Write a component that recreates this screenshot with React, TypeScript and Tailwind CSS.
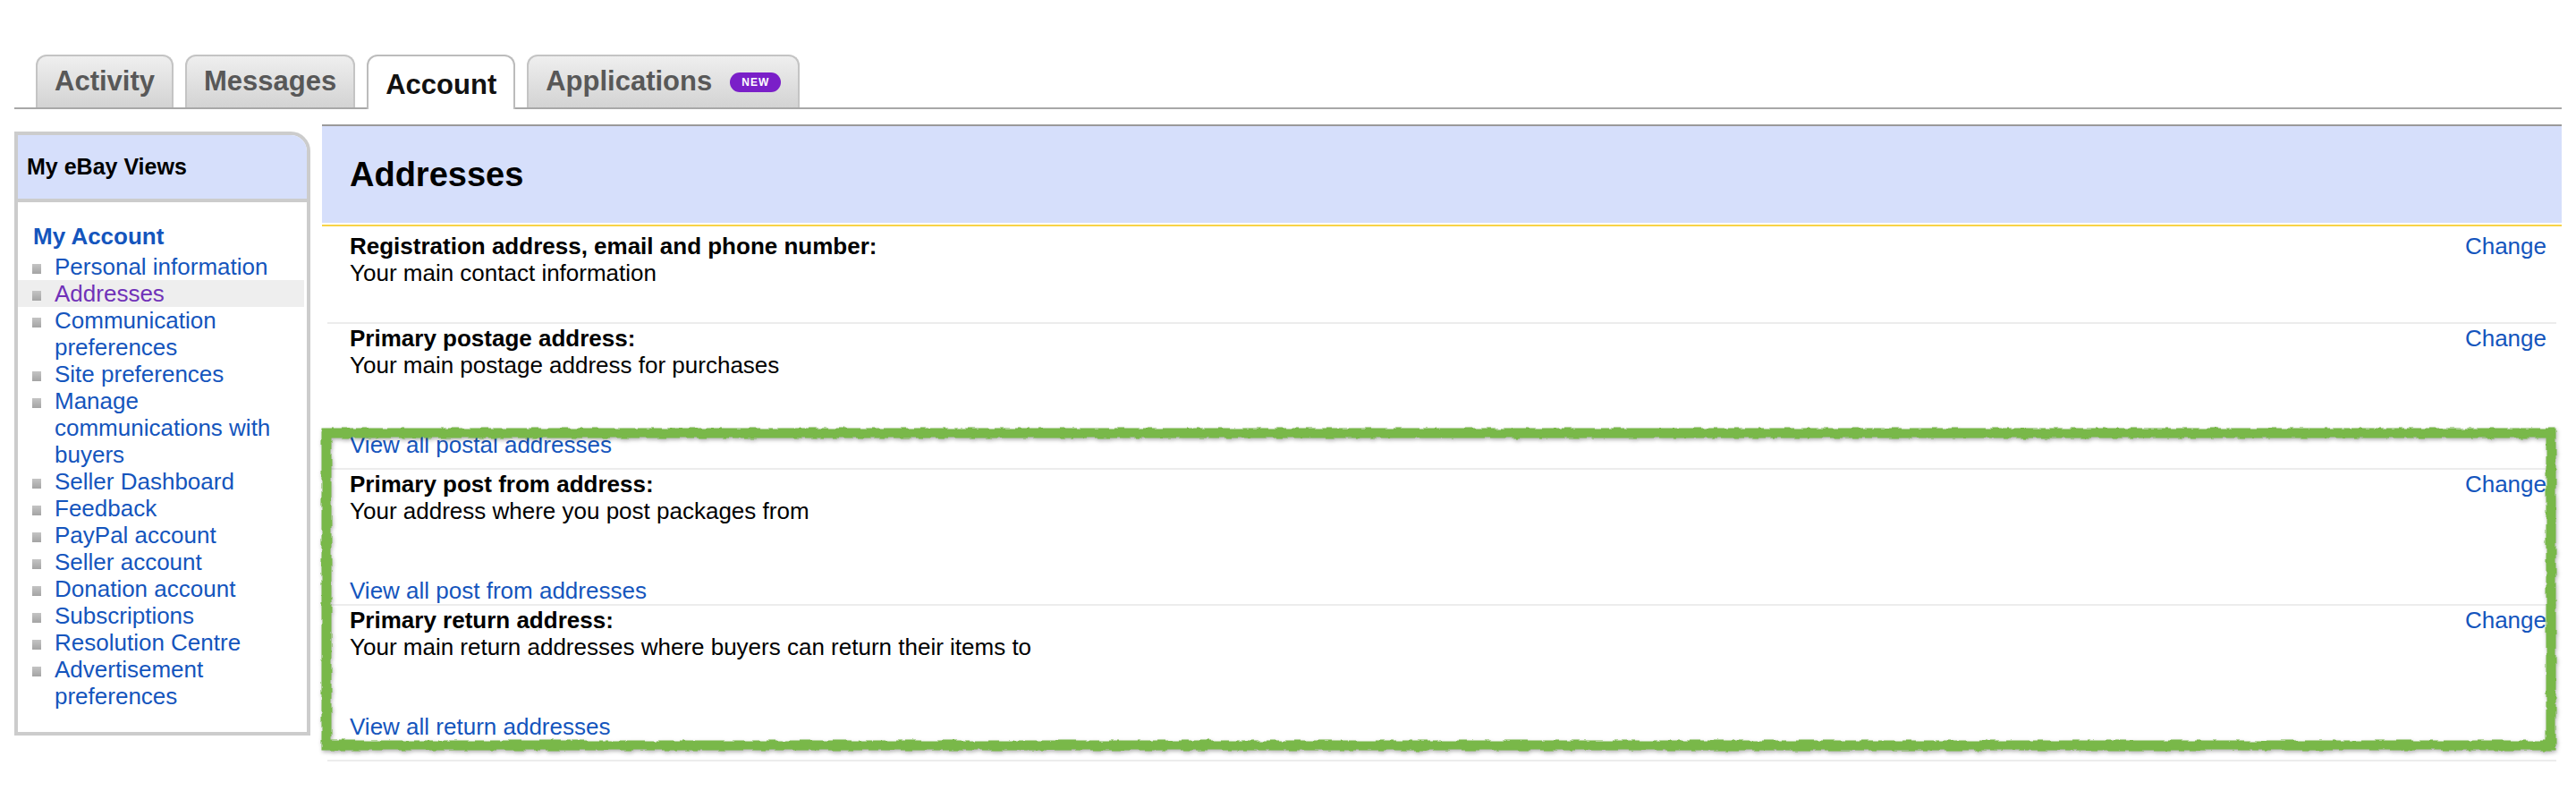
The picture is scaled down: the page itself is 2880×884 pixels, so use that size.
import React from "react"

const tabs = [
  { label: "Activity", active: false },
  { label: "Messages", active: false },
  { label: "Account", active: true },
  { label: "Applications", active: false, badge: true },
]

const menu = [
  "Personal information",
  "Addresses",
  "Communication preferences",
  "Site preferences",
  "Manage communications with buyers",
  "Seller Dashboard",
  "Feedback",
  "PayPal account",
  "Seller account",
  "Donation account",
  "Subscriptions",
  "Resolution Centre",
  "Advertisement preferences",
]

function Tab({ label, active, badge }: { label: string; active: boolean; badge?: boolean }) {
  if (active) {
    return (
      <div className="relative -mb-[2px] flex h-[61px] items-center rounded-t-[12px] border-2 border-b-0 border-[#bcbcbc] bg-white px-[19px] pt-[6px] text-[31px] font-bold text-[#111]">
        {label}
      </div>
    )
  }
  return (
    <div className="flex h-[59px] items-center gap-[20px] rounded-t-[12px] border-2 border-b-0 border-[#c4c4c4] bg-gradient-to-b from-[#efefef] to-[#d3d3d3] px-[19px] text-[31px] font-bold text-[#585858]">
      <span>{label}</span>
      {badge && (
        <span className="flex h-[22px] w-[57px] items-center justify-center rounded-full bg-[#7a1fc8] text-[12px] font-bold tracking-[1px] text-white">
          NEW
        </span>
      )}
    </div>
  )
}

function Row({
  title,
  body,
  link,
  pt,
  pb,
}: {
  title: string
  body: string
  link?: string
  pt: string
  pb: string
}) {
  return (
    <div className={`mx-[6px] border-b-2 border-[#ececec] pl-[25px] pr-[11px] ${pt} ${pb}`}>
      <div className="flex justify-between">
        <div>
          <div className="font-bold">{title}</div>
          <div>{body}</div>
        </div>
        <a className="text-[#1455bd]">Change</a>
      </div>
      {link && <a className="mt-[59px] block text-[#1455bd]">{link}</a>}
    </div>
  )
}

export default function App() {
  return (
    <div className="min-h-[884px] w-full bg-white font-['Liberation_Sans',Arial,sans-serif] text-black">
      {/* tabs */}
      <div className="ml-[16px] flex w-[2848px] items-end gap-[13px] border-b-2 border-[#a8a8a8] pl-[24px] pt-[61px]">
        {tabs.map((t) => (
          <Tab key={t.label} {...t} />
        ))}
      </div>

      <div className="ml-[16px] mt-[17px] flex items-start gap-[13px]">
        {/* sidebar */}
        <div className="mt-[8px] w-[331px] rounded-tr-[22px] border-4 border-[#cccccc] bg-white">
          <div className="flex h-[75px] items-center rounded-tr-[18px] border-b-4 border-[#cccccc] bg-[#d6dffb] pl-[10px] text-[25px] font-bold">
            My eBay Views
          </div>
          <div className="pb-[25px] pt-[23px] text-[26px] leading-[30px]">
            <div className="mb-[4px] pl-[17px] font-bold text-[#1455bd]">My Account</div>
            {menu.map((m) => (
              <div
                key={m}
                className={`mr-[3px] flex pl-[16px] pr-[8px] ${m === "Addresses" ? "bg-[#eeeeee] text-[#7031b8]" : "text-[#1455bd]"}`}
              >
                <span className="mr-[15px] mt-[12px] h-[11px] w-[10px] shrink-0 bg-gradient-to-b from-[#c4c4c4] to-[#a4a4a4]" />
                <span>{m}</span>
              </div>
            ))}
          </div>
        </div>

        {/* main */}
        <div className="relative w-[2504px]">
          <div className="flex h-[112px] items-center border-t-2 border-b-2 border-t-[#9a9a9a] border-b-white bg-[#d6dffb] pl-[31px] text-[38px] font-bold">
            Addresses
          </div>
          <div className="h-[2px] bg-[#f8d347]" />

          <div className="text-[26px] leading-[30px]">
            <Row
              title="Registration address, email and phone number:"
              body="Your main contact information"
              pt="pt-[7px]"
              pb="pb-[40px]"
            />
            <Row
              title="Primary postage address:"
              body="Your main postage address for purchases"
              link="View all postal addresses"
              pt="pt-[1px]"
              pb="pb-[11px]"
            />
            <Row
              title="Primary post from address:"
              body="Your address where you post packages from"
              link="View all post from addresses"
              pt="pt-[1px]"
              pb="pb-0"
            />
            <Row
              title="Primary return address:"
              body="Your main return addresses where buyers can return their items to"
              link="View all return addresses"
              pt="pt-[1px]"
              pb="pb-[22px]"
            />
          </div>

          {/* green highlight annotation */}
          <svg
            className="pointer-events-none absolute left-[-1px] top-[339px] h-[361px] w-[2499px] overflow-visible drop-shadow-[1px_2px_2px_rgba(0,0,0,0.3)]"
            viewBox="0 0 2499 361"
          >
            <defs>
              <filter id="rough" x="-1%" y="-5%" width="102%" height="110%">
                <feTurbulence type="fractalNoise" baseFrequency="0.09" numOctaves="2" seed="3" result="n" />
                <feDisplacementMap in="SourceGraphic" in2="n" scale="5" />
              </filter>
            </defs>
            <rect
              x="6"
              y="6"
              width="2487"
              height="349"
              fill="none"
              stroke="#79b84a"
              strokeWidth="11"
              filter="url(#rough)"
            />
          </svg>
        </div>
      </div>
    </div>
  )
}
